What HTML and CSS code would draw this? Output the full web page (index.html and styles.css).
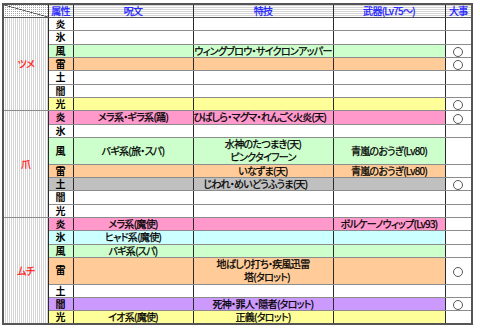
FILE: index.html
```html
<!DOCTYPE html>
<html lang="ja">
<head>
<meta charset="utf-8">
<title>属性表</title>
<link rel="stylesheet" href="styles.css">
</head>
<body>
<table class="sheet">
  <colgroup>
    <col class="c-grp"><col class="c-attr"><col class="c-spell"><col class="c-skill"><col class="c-weap"><col class="c-imp">
  </colgroup>
  <thead>
    <tr class="head">
      <th class="corner"></th><th>属性</th><th>呪文</th><th>特技</th><th>武器(Lv75〜)</th><th>大事</th>
    </tr>
  </thead>
  <tbody>
    <tr class="r-white grp-start"><td class="grp" rowspan="7">ツメ</td><td class="attr">炎</td><td></td><td></td><td></td><td class="imp"></td></tr>
    <tr class="r-white"><td class="attr">氷</td><td></td><td></td><td></td><td class="imp"></td></tr>
    <tr class="r-green"><td class="attr">風</td><td></td><td>ウィングブロウ・サイクロンアッパー</td><td></td><td class="imp"><span class="mark"></span></td></tr>
    <tr class="r-orange"><td class="attr">雷</td><td></td><td></td><td></td><td class="imp"><span class="mark"></span></td></tr>
    <tr class="r-white"><td class="attr">土</td><td></td><td></td><td></td><td class="imp"></td></tr>
    <tr class="r-white"><td class="attr">闇</td><td></td><td></td><td></td><td class="imp"></td></tr>
    <tr class="r-yellow"><td class="attr">光</td><td></td><td></td><td></td><td class="imp"><span class="mark"></span></td></tr>

    <tr class="r-pink grp-start"><td class="grp" rowspan="7">爪</td><td class="attr">炎</td><td>メラ系・ギラ系(踊)</td><td class="sk-l">ひばしら・マグマ・れんごく火炎(天)</td><td></td><td class="imp"><span class="mark"></span></td></tr>
    <tr class="r-white"><td class="attr">氷</td><td></td><td></td><td></td><td class="imp"></td></tr>
    <tr class="r-green dbl"><td class="attr">風</td><td>バギ系(旅・スパ)</td><td>水神のたつまき(天)<br>ピンクタイフーン</td><td>青嵐のおうぎ(Lv80)</td><td class="imp"></td></tr>
    <tr class="r-orange"><td class="attr">雷</td><td></td><td>いなずま(天)</td><td>青嵐のおうぎ(Lv80)</td><td class="imp"></td></tr>
    <tr class="r-gray"><td class="attr">土</td><td></td><td class="sk-l">じわれ・めいどうふうま(天)</td><td></td><td class="imp"><span class="mark"></span></td></tr>
    <tr class="r-white"><td class="attr">闇</td><td></td><td></td><td></td><td class="imp"></td></tr>
    <tr class="r-white"><td class="attr">光</td><td></td><td></td><td></td><td class="imp"></td></tr>

    <tr class="r-pink grp-start"><td class="grp" rowspan="7">ムチ</td><td class="attr">炎</td><td>メラ系(魔使)</td><td></td><td>ボルケーノウィップ(Lv93)</td><td class="imp"></td></tr>
    <tr class="r-cyan"><td class="attr">氷</td><td>ヒャド系(魔使)</td><td></td><td></td><td class="imp"></td></tr>
    <tr class="r-green"><td class="attr">風</td><td>バギ系(スパ)</td><td></td><td></td><td class="imp"></td></tr>
    <tr class="r-orange dbl"><td class="attr">雷</td><td></td><td>地ばしり打ち・疾風迅雷<br><span class="indent">塔(タロット)</span></td><td></td><td class="imp"><span class="mark"></span></td></tr>
    <tr class="r-white"><td class="attr">土</td><td></td><td></td><td></td><td class="imp"></td></tr>
    <tr class="r-purple"><td class="attr">闇</td><td></td><td>死神・罪人・隠者(タロット)</td><td></td><td class="imp"><span class="mark"></span></td></tr>
    <tr class="r-yellow"><td class="attr">光</td><td>イオ系(魔使)</td><td>正義(タロット)</td><td></td><td class="imp"></td></tr>
  </tbody>
</table>
</body>
</html>
```

FILE: styles.css
```css
html, body {
  margin: 0;
  padding: 0;
  background: #ffffff;
}

body {
  font-family: "Noto Sans CJK JP", "Noto Sans", sans-serif;
}

.sheet {
  border-collapse: collapse;
  table-layout: fixed;
  width: 470px;
  margin: 3px 0 0 2px;
  border: 2px solid #555555;
  font-size: 10px;
  letter-spacing: -0.7px;
  font-feature-settings: "palt";
  -webkit-text-stroke: 0.25px currentColor;
  color: #000000;
}

.c-grp { width: 45px; }
.c-attr { width: 25px; }
.c-spell { width: 120px; }
.c-skill { width: 140px; }
.c-weap { width: 112px; }
.c-imp { width: 27px; }

.sheet th,
.sheet td {
  padding: 0;
  border-top: 1px solid #8c8c8c;
  border-bottom: 1px solid #8c8c8c;
  border-left: 1px solid #2a2a2a;
  border-right: 1px solid #2a2a2a;
  text-align: center;
  vertical-align: middle;
  line-height: 12px;
  white-space: nowrap;
  font-weight: normal;
}

.sheet tr { height: 13.33px; }
.sheet tr.head { height: 13px; }
.sheet tr.dbl { height: 26.67px; }
.sheet tr.dbl td { line-height: 12.5px; }

.head th {
  color: #1a1aff;
  background-color: #ffffff;
  background-image: conic-gradient(#a8a8a8 0 25%, transparent 0);
  background-size: 2px 2px;
  border-bottom: 1px solid #555555;
}

.head th.corner {
  background-image:
    linear-gradient(to top right, transparent calc(50% - 0.7px), #3a3a3a 50%, transparent calc(50% + 0.7px)),
    conic-gradient(#a8a8a8 0 25%, transparent 0);
  background-size: 100% 100%, 2px 2px;
}

.sheet td.grp {
  color: #ff1a1a;
  background-color: #ffffff;
  background-image: conic-gradient(#a8a8a8 0 25%, transparent 0);
  background-size: 2px 2px;
}

.sheet td.attr { font-weight: bold; letter-spacing: 0; -webkit-text-stroke: 0; }

.r-white td { background-color: #ffffff; }
.r-green td { background-color: #ccffcc; }
.r-orange td { background-color: #ffcc99; }
.r-yellow td { background-color: #ffff99; }
.r-pink td { background-color: #ff99cc; }
.r-gray td { background-color: #c0c0c0; }
.r-cyan td { background-color: #ccffff; }
.r-purple td { background-color: #cc99ff; }

.sheet td.imp { background-color: #ffffff; }

.sheet td.sk-l { padding-right: 15px; }

.indent { padding-left: 8px; }

.mark {
  display: inline-block;
  width: 10px;
  height: 10px;
  box-sizing: border-box;
  border: 1px solid #555555;
  border-radius: 50%;
  vertical-align: middle;
  background: #ffffff;
}
```
